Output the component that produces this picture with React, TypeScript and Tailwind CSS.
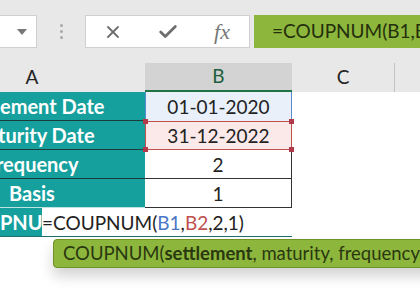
import { X, Check } from 'lucide-react'

const labels = ['Settlement Date', 'Maturity Date', 'Frequency', 'Basis']

function LabelCell({ text, last }: { text: string; last?: boolean }) {
  return (
    <div
      className={`w-[145px] h-[29px] overflow-hidden bg-[#16a09d] ${
        last ? 'border-b border-[#bfe3e2]' : 'border-b border-[#1d3b3a]'
      }`}
    >
      <div className="w-[226px] -ml-[81px] h-full flex items-center justify-center text-white font-bold text-[20px] leading-none">
        {text}
      </div>
    </div>
  )
}

export default function App() {
  return (
    <div
      className="relative w-[420px] h-[294px] overflow-hidden bg-white text-[#222]"
      style={{ fontFamily: 'Lato, "Open Sans", sans-serif' }}
    >
      {/* toolbar */}
      <div className="h-[63px] bg-[#e8e8e8] flex items-start pt-[15px]">
        <div className="w-[37px] h-[33px] bg-white border-y border-r border-[#cfcfcf] flex items-center justify-end pr-[9px]">
          <div className="w-0 h-0 border-l-[5px] border-r-[5px] border-t-[6px] border-l-transparent border-r-transparent border-t-[#777]" />
        </div>
        <div className="w-[48px] h-[33px] flex flex-col items-center justify-center gap-[3px]">
          <div className="w-[3px] h-[3px] rounded-full bg-[#a8a8a8]" />
          <div className="w-[3px] h-[3px] rounded-full bg-[#a8a8a8]" />
          <div className="w-[3px] h-[3px] rounded-full bg-[#a8a8a8]" />
        </div>
        <div className="w-[165px] h-[33px] bg-white border border-[#cfcfcf] flex items-center">
          <div className="w-[54px] flex justify-center">
            <X size={20} strokeWidth={2.2} className="text-[#6e6e6e]" />
          </div>
          <div className="w-[56px] flex justify-center">
            <Check size={22} strokeWidth={3} className="text-[#6e6e6e]" />
          </div>
          <div
            className="w-[52px] flex justify-center italic text-[22px] text-[#777] leading-none"
            style={{ fontFamily: '"Liberation Serif", serif' }}
          >
            fx
          </div>
        </div>
        <div className="ml-[4px] flex-1 h-[33px] bg-[#8db63d] flex items-center pl-[18px] text-[19px] text-[#24300c] whitespace-nowrap overflow-hidden">
          =COUPNUM(B1,B2,2,1)
        </div>
      </div>

      {/* column headers */}
      <div className="flex h-[29px] bg-[#e8e8e8] text-[19px] text-[#222]">
        <div className="w-[145px] overflow-hidden">
          <div className="w-[226px] -ml-[81px] h-full flex items-center justify-center">A</div>
        </div>
        <div className="w-[147px] bg-[#d3d3d3] border-b-2 border-[#217346] flex items-center justify-center text-[#1e5e3c]">
          B
        </div>
        <div className="w-[103px] border-r border-[#c4c4c4] flex items-center justify-center">C</div>
        <div className="flex-1" />
      </div>

      {/* rows */}
      <div className="flex">
        <div className="flex flex-col">
          {labels.map((l, i) => (
            <LabelCell key={l} text={l} last={i === 3} />
          ))}
          <div className="w-[145px] h-[29px] overflow-hidden bg-[#16a09d] border-b border-[#1d6e6c]">
            <div className="h-full flex items-center -ml-[44px] text-white font-bold text-[20px] leading-none whitespace-nowrap">
              COUPNUM
            </div>
          </div>
        </div>
        <div className="flex flex-col w-[147px] text-[19px] leading-none">
          <div className="h-[29px] bg-[#e9f0fa] border-l border-r border-[#5b8bd0] flex items-center justify-center">
            01-01-2020
          </div>
          <div className="relative h-[29px] bg-[#fbe8e8] border border-[#c0504d] flex items-center justify-center">
            31-12-2022
            <span className="absolute -left-[3px] -top-[3px] w-[5px] h-[5px] bg-[#b03a4a]" />
            <span className="absolute -right-[3px] -top-[3px] w-[5px] h-[5px] bg-[#b03a4a]" />
            <span className="absolute -left-[3px] -bottom-[3px] w-[5px] h-[5px] bg-[#b03a4a]" />
            <span className="absolute -right-[3px] -bottom-[3px] w-[5px] h-[5px] bg-[#b03a4a]" />
          </div>
          <div className="h-[29px] border-r border-b border-[#333] flex items-center justify-center">2</div>
          <div className="h-[29px] border-r border-b border-[#333] flex items-center justify-center">1</div>
          <div className="h-[29px] border-b border-[#1d6e6c]" />
        </div>
      </div>

      {/* in-cell editor */}
      <div className="absolute left-[42px] top-[208px] w-[250px] h-[28px] bg-white flex items-center text-[19px] leading-none whitespace-nowrap">
        <span>=COUPNUM(</span>
        <span className="text-[#4a76c5]">B1</span>
        <span>,</span>
        <span className="text-[#c0504d]">B2</span>
        <span>,2,1)</span>
      </div>

      {/* function tooltip */}
      <div className="absolute left-[53px] top-[239px] w-[420px] h-[29px] bg-[#8db63d] border border-[#6f9226] rounded-[4px] shadow-[0_8px_14px_rgba(0,0,0,0.18)] flex items-center pl-[9px] text-[18.5px] text-[#2a3810] whitespace-nowrap">
        COUPNUM(<b>settlement</b>, maturity, frequency, basis)
      </div>
    </div>
  )
}
